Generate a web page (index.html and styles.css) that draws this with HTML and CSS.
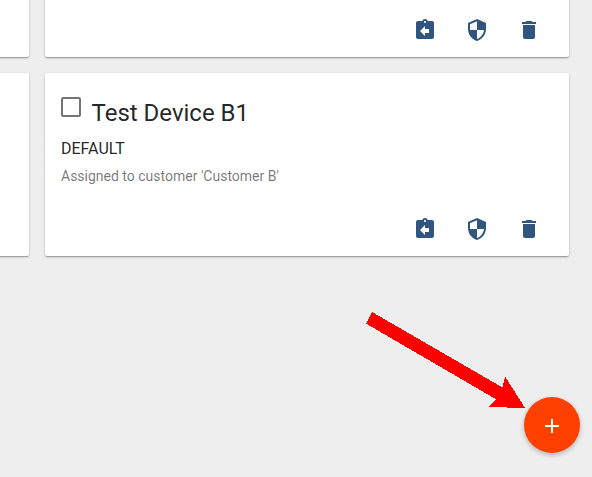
FILE: index.html
```html
<!DOCTYPE html>
<html lang="en">
<head>
<meta charset="utf-8">
<title>Devices</title>
<link rel="stylesheet" href="styles.css">
</head>
<body>
<svg class="symbols" aria-hidden="true">
  <symbol id="return" viewBox="0 0 24 24"><path d="M19 3h-4.180C14.400 1.840 13.300 1 12 1c-1.300 0-2.400.84-2.820 2H5c-1.100 0-2 .9-2 2v14c0 1.100.9 2 2 2h14c1.100 0 2-.9 2-2V5c0-1.100-.9-2-2-2zm-7 0c.55 0 1 .45 1 1s-.45 1-1 1-1-.45-1-1 .45-1 1-1zm4 12h-4v3l-5-5 5-5v3h4v4z"/></symbol>
  <symbol id="shield" viewBox="0 0 24 24"><path d="M12 1L3 5v6c0 5.550 3.840 10.740 9 12 5.160-1.260 9-6.450 9-12V5l-9-4zm0 10.990h7c-.53 4.120-3.280 7.790-7 8.940V12H5V6.300l7-3.110v8.800z"/></symbol>
  <symbol id="delete" viewBox="0 0 24 24"><path d="M6 19c0 1.100.9 2 2 2h8c1.100 0 2-.9 2-2V7H6v12zM19 4h-3.500l-1-1h-5l-1 1H5v2h14V4z"/></symbol>
</svg>
<main class="grid">
  <section class="card"></section>
  <section class="card">
    <div class="actions">
      <svg class="icon"><use href="#return"/></svg>
      <svg class="icon"><use href="#shield"/></svg>
      <svg class="icon"><use href="#delete"/></svg>
    </div>
  </section>
  <section class="card"></section>
  <section class="card">
    <header class="heading">
      <span class="checkbox" role="checkbox" aria-checked="false"></span>
      <h2 class="title">Test Device B1</h2>
    </header>
    <div class="type">DEFAULT</div>
    <div class="assigned">Assigned to customer 'Customer B'</div>
    <div class="actions">
      <svg class="icon"><use href="#return"/></svg>
      <svg class="icon"><use href="#shield"/></svg>
      <svg class="icon"><use href="#delete"/></svg>
    </div>
  </section>
</main>
<svg class="arrow" viewBox="0 0 160 97"><path d="M7 1L137.500 76.500 140 65.500 160 97 123.500 96 131.500 88.500 1 12.500z"/></svg>
<button class="fab"><svg class="plus" viewBox="0 0 24 24"><path d="M19 13h-6v6h-2v-6H5v-2h6V5h2v6h6v2z"/></svg></button>
</body>
</html>
```
FILE: styles.css
```css
body {
  margin: 0;
  height: 477px;
  overflow: hidden;
  background: #eee;
  color: rgba(0, 0, 0, 0.87);
  font-family: Roboto, sans-serif;
}
.symbols { display: none; }
.grid {
  display: grid;
  grid-template-columns: 524px 524px;
  grid-auto-rows: 183px;
  gap: 16px;
  margin: -126px 0 0 -495px;
}
.card {
  display: flex;
  flex-direction: column;
  box-sizing: border-box;
  padding: 24px 16px 15px;
  border-radius: 2px;
  background: #fff;
  box-shadow: 0 1px 3px rgba(0, 0, 0, 0.2), 0 1px 1px rgba(0, 0, 0, 0.14), 0 2px 1px -1px rgba(0, 0, 0, 0.12);
}
.heading {
  display: flex;
  gap: 10.5px;
}
.checkbox {
  box-sizing: border-box;
  width: 20px;
  height: 20px;
  border: 2px solid #757575;
  border-radius: 2px;
}
.title {
  margin: 0;
  font-size: 24px;
  font-weight: 400;
  line-height: 32px;
}
.type {
  margin-top: 8px;
  font-size: 16px;
  line-height: 24px;
}
.assigned {
  margin-top: 5px;
  color: rgba(0, 0, 0, 0.54);
  font-size: 14px;
  line-height: 20px;
}
.actions {
  display: flex;
  justify-content: flex-end;
  gap: 28px;
  margin-top: auto;
  padding-right: 12px;
}
.icon {
  width: 24px;
  height: 24px;
  fill: #305680;
}
.arrow {
  position: absolute;
  left: 365px;
  top: 311px;
  width: 160px;
  height: 97px;
  fill: #f00;
  shape-rendering: crispEdges;
}
.fab {
  position: absolute;
  left: 524px;
  top: 397px;
  display: flex;
  align-items: center;
  justify-content: center;
  width: 56px;
  height: 56px;
  padding: 2px 0 0;
  border: 0;
  border-radius: 50%;
  background: #ff4000;
  box-shadow: 0 2px 5px rgba(0, 0, 0, 0.26);
}
.plus {
  width: 24px;
  height: 24px;
  fill: #fff;
}
```
